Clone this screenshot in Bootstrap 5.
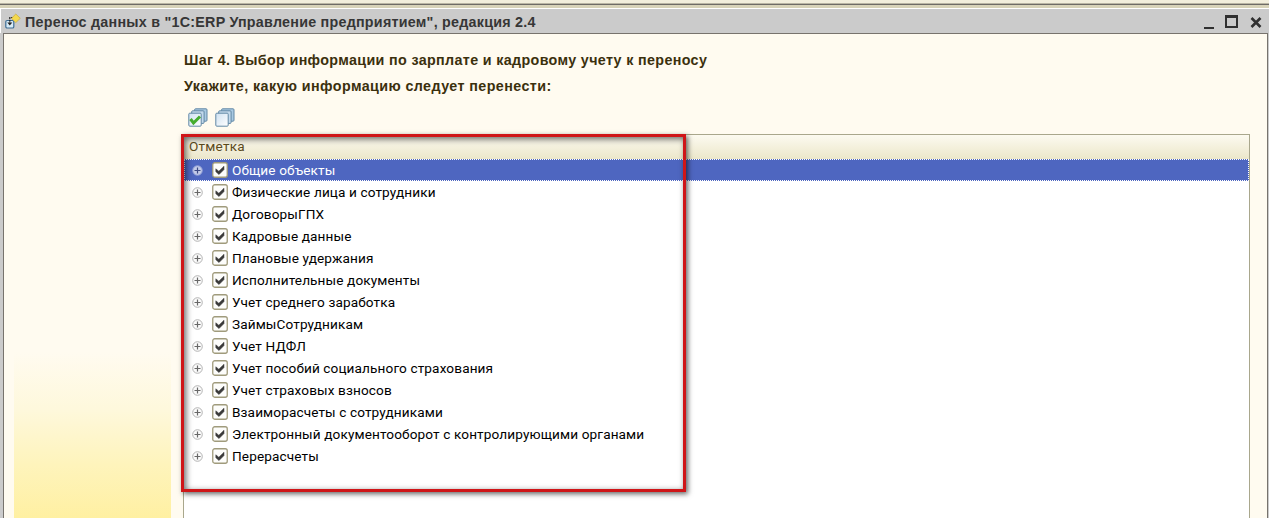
<!DOCTYPE html>
<html lang="ru">
<head>
    <meta charset="UTF-8">
    <meta name="viewport" content="width=device-width, initial-scale=1.0">
    <title>Перенос данных</title>
    <link href="https://cdn.jsdelivr.net/npm/bootstrap@5.3.0/dist/css/bootstrap.min.css" rel="stylesheet">
    <style>
        body {
            height: 518px;
            background: #cbcbcb;
            color: #000;
            font-family: Roboto, "Liberation Sans", sans-serif;
            font-size: 13.6px;
            line-height: 22px;
        }
        .top-strip {
            height: 9px;
            background: linear-gradient(#f2eedc 0 3px, #b9b5a4 3px 4px, #6e6b66 4px 5px, #d8d3b9 5px 8px, #fff 8px 9px);
        }
        .title-bar {
            height: 24px;
            padding: 0 6px 0 4px;
            background: #cbcbcb;
            border-left: 1px solid #fff;
        }
        .bold-text {
            font-family: "Liberation Sans", Arial, sans-serif;
            font-weight: 700;
            font-size: 14.3px;
            white-space: nowrap;
        }
        .title-text { color: #363636; letter-spacing: .25px; margin-left: 4px; padding-top: 2px; }
        .window-body {
            margin: 0 1px 0 3px;
            border: 1px solid #77736d;
            border-bottom: 0;
            background: #fffbf0;
        }
        .side-panel {
            width: 157px;
            margin-left: 10px;
            background: linear-gradient(#fffbf0 0 318px, #fef8dc 375px, #fef4bc 430px, #fff0a2 484px);
        }
        .main-part { margin-left: 12px; padding: 16px 17px 0 0; }
        .step-text { color: #3b300d; height: 26px; line-height: 21px; margin-left: 1px; }
        .step-one { letter-spacing: .35px; }
        .step-two { letter-spacing: .41px; }
        .tools { height: 32px; padding-left: 5px; gap: 7px; }
        .tree {
            position: relative;
            border: 1px solid #a9a78c;
            border-bottom: 0;
            background: #fff;
        }
        .tree-head {
            height: 24px;
            line-height: 22px;
            padding-left: 5px;
            letter-spacing: .2px;
            color: #5c4b1d;
            background: linear-gradient(#fcfaf0, #ece7ca);
        }
        .tree-row {
            height: 22px;
            padding-left: 8px;
            letter-spacing: .12px;
            white-space: nowrap;
        }
        .tree-row span { padding-bottom: 1px; }
        .tree-row.chosen {
            background: #4e66c0;
            color: #fff;
            outline: 1px dotted #fff;
            outline-offset: -1px;
        }
        .tree-row .check { margin: 0 4px 0 9px; }
        .red-frame {
            position: absolute;
            left: -3px;
            top: -1px;
            width: 505px;
            height: 358px;
            border: 3px solid #cf1518;
            box-shadow: 2px 2px 5px rgba(0, 0, 0, .6), inset 2px 2px 6px rgba(0, 0, 0, .6);
        }
    </style>
</head>
<body class="d-flex flex-column overflow-hidden">
    <!-- shared glyphs -->
    <svg class="d-none">
        <symbol id="plus" viewBox="0 0 11 11">
            <circle cx="5.5" cy="5.5" r="4.8" fill="#fafafa" stroke="#b4b4b4"/>
            <path d="M2.5 5.5h6M5.5 2.5v6" stroke="#686868" stroke-width="1.2"/>
        </symbol>
        <symbol id="plus-chosen" viewBox="0 0 11 11">
            <circle cx="5.5" cy="5.5" r="4.8" fill="#c3cae8" stroke="#8d9bd4"/>
            <path d="M2.5 5.5h6M5.5 2.5v6" stroke="#3d4a86" stroke-width="1.2"/>
        </symbol>
        <symbol id="tick" viewBox="0 0 16 16">
            <rect x=".75" y=".75" width="14.5" height="14.5" rx="2" fill="#fdfdfb" stroke="#a09b7c" stroke-width="1.3"/>
            <path d="M3.8 6.8l3 2.4 5.2-5v3.4L7 12.6 3.8 9.7z" fill="#3a3a3a" stroke="#3a3a3a" stroke-width=".5"/>
        </symbol>
        <symbol id="sheets" viewBox="0 0 20 20">
            <g stroke="#6288a5" stroke-width="1">
                <rect x="6.6" y=".8" width="12.4" height="12.4" rx="1" fill="#a9c9e2"/>
                <rect x="3.7" y="2.8" width="12.4" height="12.6" rx="1" fill="#c3d9eb"/>
                <rect x=".8" y="5.2" width="12.4" height="13" rx="1" fill="url(#paper)"/>
            </g>
        </symbol>
    </svg>
    <svg width="0" height="0" class="position-absolute">
        <linearGradient id="paper" x2="1" y2="1">
            <stop stop-color="#cfe1f1"/>
            <stop offset="1" stop-color="#fff"/>
        </linearGradient>
    </svg>

    <div class="top-strip flex-shrink-0"></div>

    <div class="title-bar d-flex align-items-center flex-shrink-0">
        <svg width="16" height="16" viewBox="0 0 16 16">
            <rect x=".8" y="7.5" width="8" height="7.5" rx="1.3" fill="#d7ebf7" stroke="#3d6d94" stroke-width="1.2"/>
            <path d="M4.8 4v6M8 4.5H4.5" stroke="#222" stroke-width="1.2" stroke-dasharray="2 .7"/>
            <path d="M2.3 9.5h5L4.8 12.5z" fill="#222"/>
            <path d="M10.8 1l4.5 4.3-4.5 4.3-4.4-4.3z" fill="#f4d94e" stroke="#c6a93c" stroke-width=".7"/>
        </svg>
        <span class="bold-text title-text">Перенос данных в "1С:ERP Управление предприятием", редакция 2.4</span>
        <svg class="ms-auto" width="60" height="16" viewBox="0 0 60 16" fill="none" stroke="#303030">
            <path d="M1 15h10" stroke-width="2"/>
            <path d="M23 3v11h11V3" stroke-width="2"/>
            <path d="M22 3.5h13" stroke-width="3"/>
            <path d="M48.5 5l9 9M57.5 5l-9 9" stroke-width="2.6"/>
        </svg>
    </div>

    <div class="window-body d-flex flex-grow-1">
        <div class="side-panel flex-shrink-0"></div>
        <div class="main-part d-flex flex-column flex-grow-1">
            <div class="bold-text step-text step-one">Шаг 4. Выбор информации по зарплате и кадровому учету к переносу</div>
            <div class="bold-text step-text step-two">Укажите, какую информацию следует перенести:</div>
            <div class="tools d-flex align-items-center">
                <svg width="20" height="20">
                    <use href="#sheets"/>
                    <path d="M2.5 11l3 4L12 8.5" fill="none" stroke="#45ad2d" stroke-width="3"/>
                </svg>
                <svg width="20" height="20"><use href="#sheets"/></svg>
            </div>

            <div class="tree flex-grow-1">
                <div class="tree-head">Отметка</div>
                <div id="rows"></div>
                <div class="red-frame"></div>
            </div>
        </div>
    </div>

    <script>
        const items = [
            'Общие объекты',
            'Физические лица и сотрудники',
            'ДоговорыГПХ',
            'Кадровые данные',
            'Плановые удержания',
            'Исполнительные документы',
            'Учет среднего заработка',
            'ЗаймыСотрудникам',
            'Учет НДФЛ',
            'Учет пособий социального страхования',
            'Учет страховых взносов',
            'Взаиморасчеты с сотрудниками',
            'Электронный документооборот с контролирующими органами',
            'Перерасчеты'
        ];

        document.getElementById('rows').innerHTML = items.map((name, i) => `
            <div class="tree-row d-flex align-items-center ${i === 0 ? 'chosen' : ''}">
                <svg width="11" height="11"><use href="#${i === 0 ? 'plus-chosen' : 'plus'}"/></svg>
                <svg class="check" width="16" height="16"><use href="#tick"/></svg>
                <span>${name}</span>
            </div>`).join('');
    </script>
    <script src="https://cdn.jsdelivr.net/npm/bootstrap@5.3.0/dist/js/bootstrap.bundle.min.js"></script>
</body>
</html>
